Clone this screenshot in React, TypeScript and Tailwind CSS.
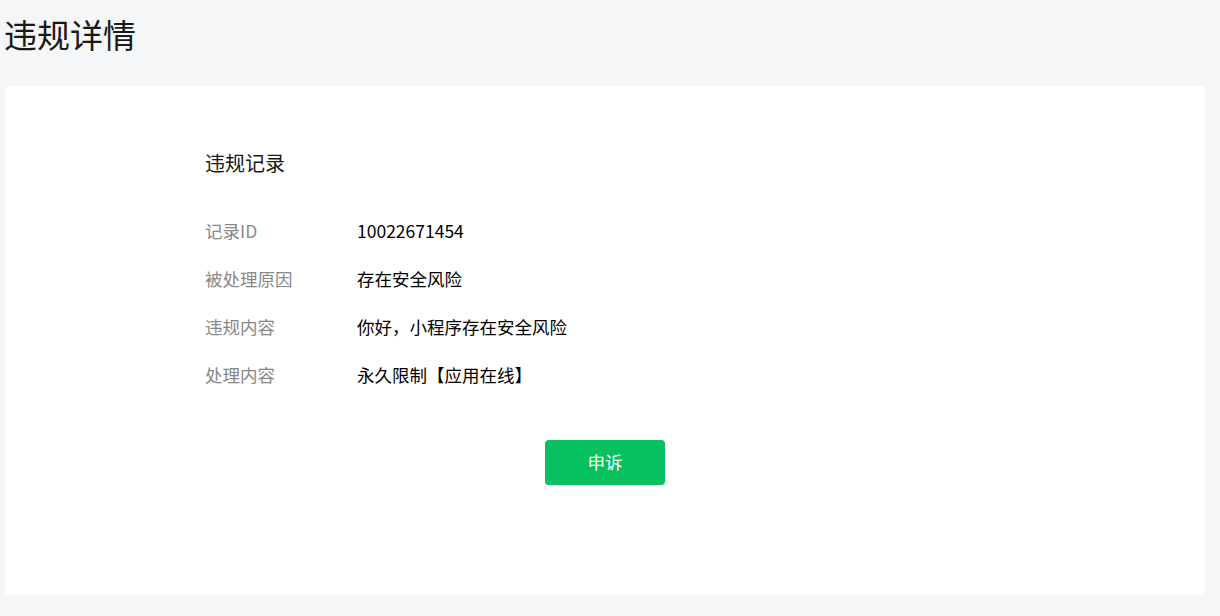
const rows = [
  { label: '记录ID', value: '10022671454' },
  { label: '被处理原因', value: '存在安全风险' },
  { label: '违规内容', value: '你好，小程序存在安全风险' },
  { label: '处理内容', value: '永久限制【应用在线】' },
];

export default function App() {
  return (
    <div
      className="min-h-[616px] bg-[#f5f6f7] pl-[5px] pr-[15px]"
      style={{ fontFamily: '"Noto Sans CJK SC", "Noto Sans", sans-serif' }}
    >
      <h1 className="-ml-[1px] pt-[10px] text-[33px] leading-[48px] font-normal text-[#1a1a1a]">违规详情</h1>
      <div className="mt-[28px] h-[509px] w-[1200px] rounded-[4px] bg-white">
        <div className="pl-[200px] pt-[64px]">
          <h2 className="text-[20px] leading-[26px] font-normal text-[#1a1a1a]">违规记录</h2>
          <div className="mt-[31px] flex flex-col">
            {rows.map((r) => (
              <div key={r.label} className="flex h-[48px] items-center text-[17.5px]">
                <div className="w-[152px] text-[#888888]">{r.label}</div>
                <div className="text-black">{r.value}</div>
              </div>
            ))}
          </div>
        </div>
        <div className="mt-[41px] flex justify-center">
          <button className="h-[45px] w-[120px] rounded-[4px] bg-[#07c160] text-[17.5px] text-white">
            申诉
          </button>
        </div>
      </div>
    </div>
  );
}
